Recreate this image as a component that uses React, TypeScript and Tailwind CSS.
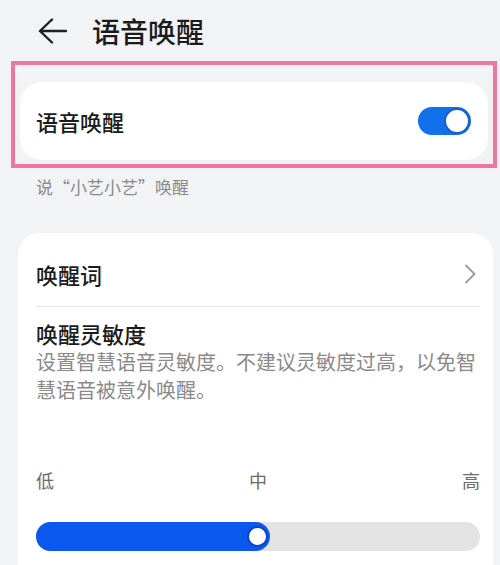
import React from 'react';

const font = { fontFamily: '"Noto Sans CJK SC", "Noto Sans", sans-serif' };

const BackArrow = () => (
  <svg width="30" height="28" viewBox="0 0 30 28" fill="none">
    <path d="M29 14H3M15 2.5L3 14l12 11.5" stroke="#1f1f1f" strokeWidth="2.4" strokeLinecap="round" strokeLinejoin="round" />
  </svg>
);

const Chevron = () => (
  <svg width="12" height="20" viewBox="0 0 12 20" fill="none">
    <path d="M2 1.5L10.5 10 2 18.5" stroke="#9a9a9a" strokeWidth="1.8" strokeLinecap="round" strokeLinejoin="round" />
  </svg>
);

export default function App() {
  const level = 234;

  return (
    <div className="w-[500px] h-[565px] overflow-hidden bg-[#f1f3f5] text-[#1b1b1b]" style={font}>
      <div className="h-[61px] flex items-center pl-[37px]">
        <BackArrow />
        <span className="ml-[25px] text-[28px] leading-[34px] font-medium">语音唤醒</span>
      </div>

      <div className="ml-[11px] w-[486px] h-[107px] border-4 border-[#ee77a0] pt-[17px] px-[5px]">
        <div className="h-[78px] rounded-[22px] bg-white flex items-center justify-between pl-[16px] pr-[17px]">
          <span className="text-[22px] leading-[30px] font-medium">语音唤醒</span>
          <div className="relative w-[53px] h-[28px] rounded-full bg-[#1170ec]">
            <div className="absolute top-[1px] right-[1px] w-[26px] h-[26px] rounded-full bg-white border-2 border-[#1d5fc9]" />
          </div>
        </div>
      </div>

      <div className="pl-[36px] mt-[6px] text-[17px] leading-[26px] text-[#8a8a8a]">说“小艺小艺”唤醒</div>

      <div className="ml-[18px] mt-[33px] w-[475px] h-[400px] rounded-[22px] bg-white pl-[18px] pr-[13px]">
        <div className="h-[73px] flex items-center justify-between pt-[8px] pr-[4px]">
          <span className="text-[22px] leading-[30px] font-medium">唤醒词</span>
          <Chevron />
        </div>
        <div className="h-px bg-[#e6e6e6]" />
        <div className="mt-[11px] text-[22px] leading-[30px] font-medium">唤醒灵敏度</div>
        <p className="text-[20px] leading-[28px] text-[#8a8a8a]">设置智慧语音灵敏度。不建议灵敏度过高，以免智慧语音被意外唤醒。</p>

        <div className="mt-[63px] flex justify-between text-[18px] leading-[26px] text-[#6b6b6b]">
          <span>低</span>
          <span>中</span>
          <span>高</span>
        </div>

        <div className="mt-[29px] h-[29px] rounded-full bg-[#e3e3e3]">
          <div className="relative h-full rounded-full bg-[#0b57f0]" style={{ width: level }}>
            <div className="absolute right-[2px] top-[4px] w-[21px] h-[21px] rounded-full bg-white border-2 border-[#0a45c2]" />
          </div>
        </div>
      </div>
    </div>
  );
}
